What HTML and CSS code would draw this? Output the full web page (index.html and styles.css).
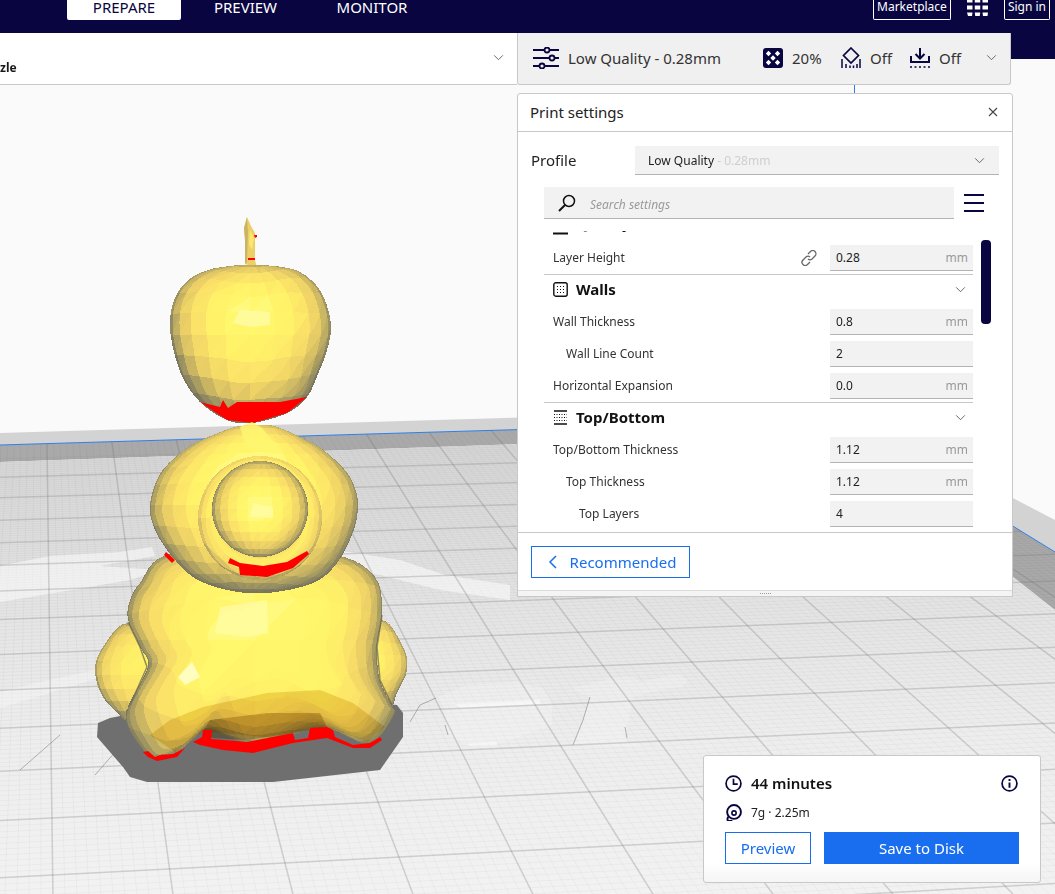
FILE: index.html
```html
<!DOCTYPE html>
<html lang="en">
<head>
<meta charset="utf-8">
<title>Print settings</title>
<link rel="stylesheet" href="styles.css">
</head>
<body>
<div class="app">
  <canvas class="scene" id="scene" width="1055" height="894"></canvas>

  <header class="topbar">
    <nav class="tabs">
      <span class="tab tab-active">PREPARE</span>
      <span class="tab tab-preview">PREVIEW</span>
      <span class="tab tab-monitor">MONITOR</span>
    </nav>
    <div class="top-actions">
      <span class="top-btn">Marketplace</span>
      <svg class="apps" viewBox="0 0 21 16"><path d="M0 0h5.500v2.500H0zM7.750 0h5.500v2.500h-5.500zM15.500 0H21v2.500h-5.500zM0 5.500h5.500v4H0zM7.750 5.500h5.500v4h-5.500zM15.500 5.500H21v4h-5.500zM0 12.500h5.500L5 16H1zM7.750 12.500h5.500l-.5 3.500h-4.500zM15.500 12.500H21l-.5 3.500H16z" fill="#fff"/></svg>
      <span class="top-btn">Sign in</span>
    </div>
  </header>

  <div class="toolrow">
    <div class="machine">
      <span class="machine-name">zle</span>
      <svg class="chev" viewBox="0 0 12 8"><path d="M1 1.500l5 5 5-5" fill="none" stroke="#555" stroke-width="1"/></svg>
    </div>
    <div class="quality">
      <svg class="q-icon q-sliders" viewBox="0 0 26 22"><g fill="none" stroke="#080540" stroke-width="1.800"><path d="M0 3h11M17 3h9M0 11h16M22 11h4M0 19h6M12 19h14"/><circle cx="14" cy="3" r="2.500"/><circle cx="19" cy="11" r="2.500"/><circle cx="9" cy="19" r="2.500"/></g></svg>
      <span class="q-name">Low Quality - 0.28mm</span>
      <svg class="q-icon q-infill" viewBox="0 0 20 20"><rect width="20" height="20" rx="3" fill="#080540"/><path d="M5.500 2.800l2.700 2.700-2.700 2.700-2.700-2.700zM14.500 2.800l2.700 2.700-2.700 2.700-2.700-2.700zM10 7.300l2.700 2.700-2.700 2.700L7.300 10zM5.500 11.800l2.700 2.700-2.700 2.700-2.700-2.700zM14.500 11.800l2.700 2.700-2.700 2.700-2.700-2.700z" fill="#fff"/></svg>
      <span class="q-val q-val-infill">20%</span>
      <svg class="q-icon q-support" viewBox="0 0 20 21"><g fill="none" stroke="#080540" stroke-width="1.700"><path d="M10 1l7.500 7.500L10 16 2.500 8.500z"/><path d="M1 21v-9M5 21v-4M9 21v-2.500M12.500 21v-2.500M16 21v-4M19 21v-9" stroke-width="1.500"/></g></svg>
      <span class="q-val q-val-support">Off</span>
      <svg class="q-icon q-adhesion" viewBox="0 0 20 20"><g fill="none" stroke="#080540" stroke-width="2"><path d="M10 0v10M5.500 6l4.500 4.500L14.500 6M1 8v6h18V8"/><path d="M0 19h20" stroke-dasharray="2 2.500" stroke-width="1.700"/></g></svg>
      <span class="q-val q-val-adhesion">Off</span>
      <svg class="chev q-chev" viewBox="0 0 12 8"><path d="M1 1.500l5 5 5-5" fill="none" stroke="#555" stroke-width="1"/></svg>
    </div>
    <div class="nav-ext"></div>
  </div>
  <div class="tick"></div>

  <section class="panel">
    <div class="panel-head">
      <span>Print settings</span>
      <svg class="close" viewBox="0 0 10 10"><path d="M1 1l8 8M9 1l-8 8" stroke="#444" stroke-width="1.100"/></svg>
    </div>
    <div class="profile-row">
      <span class="profile-label">Profile</span>
      <div class="profile-select">
        <span>Low Quality <span class="muted">- 0.28mm</span></span>
        <svg class="chev" viewBox="0 0 12 8"><path d="M1 1.500l5 5 5-5" fill="none" stroke="#555" stroke-width="1"/></svg>
      </div>
    </div>
    <div class="search-row">
      <div class="search">
        <svg class="search-icon" viewBox="0 0 18 18"><circle cx="11" cy="7" r="5.500" fill="none" stroke="#111" stroke-width="1.500"/><path d="M7 11l-6 6" stroke="#111" stroke-width="2"/></svg>
        <span>Search settings</span>
      </div>
      <svg class="menu" viewBox="0 0 20 18"><path d="M0 1h20M0 9h20M0 17h20" stroke="#080540" stroke-width="2"/></svg>
    </div>
    <div class="settings">
      <div class="cat cat-clipped">
        <svg class="cat-icon" viewBox="0 0 15 15"><path d="M0 13.500h15" stroke="#111" stroke-width="2"/></svg>
        <span>Quality</span>
      </div>
      <div class="row">
        <span class="label">Layer Height</span>
        <svg class="link" viewBox="0 0 16 16"><g fill="none" stroke="#666" stroke-width="1.300"><path d="M7 4l2.500-2.500a3 3 0 0 1 4.500 4.500L11 9a3 3 0 0 1-4 0"/><path d="M9 12l-2.500 2.500A3 3 0 0 1 2 10l3-3a3 3 0 0 1 4 0"/></g></svg>
        <div class="field"><span>0.28</span><span class="unit">mm</span></div>
      </div>
      <div class="cat">
        <svg class="cat-icon" viewBox="0 0 15 15"><rect x=".8" y=".8" width="13.400" height="13.400" rx="2" fill="none" stroke="#111" stroke-width="1.400"/><path d="M4 4.500h7M4 7.500h7M4 10.500h7" stroke="#111" stroke-dasharray="1 2"/></svg>
        <span>Walls</span>
        <svg class="chev" viewBox="0 0 12 8"><path d="M1 1.500l5 5 5-5" fill="none" stroke="#555" stroke-width="1"/></svg>
      </div>
      <div class="row">
        <span class="label">Wall Thickness</span>
        <div class="field"><span>0.8</span><span class="unit">mm</span></div>
      </div>
      <div class="row">
        <span class="label ind1">Wall Line Count</span>
        <div class="field"><span>2</span></div>
      </div>
      <div class="row">
        <span class="label">Horizontal Expansion</span>
        <div class="field"><span>0.0</span><span class="unit">mm</span></div>
      </div>
      <div class="cat">
        <svg class="cat-icon" viewBox="0 0 15 15"><path d="M1 1h13M1 14h13" stroke="#111" stroke-width="1.400"/><path d="M1 4.500h13M1 7.500h13M1 10.500h13" stroke="#111" stroke-dasharray="1 1.500"/></svg>
        <span>Top/Bottom</span>
        <svg class="chev" viewBox="0 0 12 8"><path d="M1 1.500l5 5 5-5" fill="none" stroke="#555" stroke-width="1"/></svg>
      </div>
      <div class="row">
        <span class="label">Top/Bottom Thickness</span>
        <div class="field"><span>1.12</span><span class="unit">mm</span></div>
      </div>
      <div class="row">
        <span class="label ind1">Top Thickness</span>
        <div class="field"><span>1.12</span><span class="unit">mm</span></div>
      </div>
      <div class="row">
        <span class="label ind2">Top Layers</span>
        <div class="field"><span>4</span></div>
      </div>
      <div class="scrollbar"></div>
    </div>
    <div class="panel-foot">
      <button class="btn-outline btn-rec" type="button">
        <svg class="back" viewBox="0 0 9 14"><path d="M8 1L2 7l6 6" fill="none" stroke="#196ef0" stroke-width="1.500"/></svg>
        Recommended
      </button>
    </div>
    <div class="grip"><span></span></div>
  </section>

  <section class="summary">
    <div class="sum-time">
      <svg class="sum-icon" viewBox="0 0 16 16"><circle cx="8" cy="8" r="7" fill="none" stroke="#080540" stroke-width="1.600"/><path d="M8 3.500V8.500H12" fill="none" stroke="#080540" stroke-width="1.600"/></svg>
      <span class="sum-title">44 minutes</span>
      <svg class="sum-info" viewBox="0 0 16 16"><circle cx="8" cy="8" r="7" fill="none" stroke="#080540" stroke-width="1.600"/><path d="M8 7v5M8 3.800v1.800" stroke="#080540" stroke-width="1.800"/></svg>
    </div>
    <div class="sum-mat">
      <svg class="sum-icon" viewBox="0 0 16 16"><circle cx="8.500" cy="7.500" r="6.500" fill="none" stroke="#080540" stroke-width="1.800"/><circle cx="8.500" cy="8.500" r="2" fill="none" stroke="#080540" stroke-width="1.500"/><path d="M10.500 4h.1M3 12c-1 2-1 3 0 4h4" fill="none" stroke="#080540" stroke-width="1.800"/></svg>
      <span>7g · 2.25m</span>
    </div>
    <div class="sum-actions">
      <button class="btn-outline btn-preview" type="button">Preview</button>
      <button class="btn-solid" type="button">Save to Disk</button>
    </div>
  </section>
</div>
<script src="scene.js"></script>
</body>
</html>
```
FILE: styles.css
```css
* { box-sizing: border-box; }
html, body { margin: 0; padding: 0; }
body {
  width: 1055px;
  height: 894px;
  overflow: hidden;
  font-family: "Noto Sans", "Open Sans", sans-serif;
  color: #1a1a1a;
  background: #fafafa;
}
.app { position: relative; width: 1055px; height: 894px; overflow: hidden; }
.scene { position: absolute; left: 0; top: 0; width: 1055px; height: 894px; }

.topbar {
  position: relative;
  height: 33px;
  background: #080540;
  display: flex;
  justify-content: space-between;
}
.tabs { display: flex; margin-left: 67px; height: 20px; }
.tab {
  height: 20px;
  color: #fff;
  font-size: 15px;
  line-height: 14px;
  text-align: center;
}
.tab-active {
  width: 114px;
  background: #fff;
  color: #080540;
  border-radius: 0 0 2px 2px;
}
.tab-preview { width: 129px; }
.tab-monitor { width: 124px; }
.top-actions { display: flex; align-items: flex-start; padding-right: 5px; }
.top-btn {
  height: 20px;
  padding: 0 3px;
  border: 1px solid #fff;
  border-top: 0;
  border-radius: 0 0 2px 2px;
  color: #fff;
  font-size: 12px;
  line-height: 14px;
}
.apps { width: 21px; height: 16px; margin: 0 16px; }

.toolrow { position: relative; display: flex; height: 52px; }
.machine {
  width: 517px;
  height: 52px;
  background: #fff;
  border-bottom: 1px solid #c8c8c8;
  display: flex;
  justify-content: flex-end;
  align-items: center;
  padding-right: 13px;
  position: relative;
}
.machine-name {
  position: absolute;
  left: 0;
  top: 27px;
  font-size: 12px;
  font-weight: 700;
  line-height: 16px;
}
.machine .chev { margin-top: -3px; }
.chev { width: 11px; height: 7px; flex: none; }
.quality {
  width: 494px;
  height: 52px;
  background: #f0f0f0;
  border: 1px solid #c8c8c8;
  border-top: 0;
  border-radius: 0 0 3px 3px;
  display: flex;
  align-items: center;
  color: #333;
  font-size: 15px;
  padding-bottom: 2px;
}
.nav-ext { width: 44px; height: 26px; background: #080540; }
.q-icon { flex: none; }
.q-sliders { width: 26px; height: 22px; margin-left: 15px; }
.q-name { margin-left: 9px; width: 195px; white-space: nowrap; }
.q-infill { width: 20px; height: 20px; }
.q-val-infill { margin-left: 9px; width: 30px; }
.q-support { width: 20px; height: 21px; margin-left: 19px; }
.q-val-support { margin-left: 9px; width: 23px; }
.q-adhesion { width: 20px; height: 20px; margin-left: 17px; }
.q-val-adhesion { margin-left: 9px; width: 24px; }
.q-chev { margin-left: 23px; }

.tick {
  position: absolute;
  left: 854px;
  top: 85px;
  width: 1px;
  height: 9px;
  background: #2f7fe6;
}

.panel {
  position: absolute;
  left: 517px;
  top: 93px;
  width: 496px;
  height: 504px;
  background: #fff;
  border: 1px solid #c8c8c8;
  border-radius: 3px 3px 0 0;
  display: flex;
  flex-direction: column;
}
.panel-head {
  height: 38px;
  flex: none;
  border-bottom: 1px solid #c8c8c8;
  display: flex;
  align-items: center;
  justify-content: space-between;
  padding: 0 14px 2px 12px;
  font-size: 15px;
  color: #222;
}
.close { width: 10px; height: 10px; }
.profile-row {
  flex: none;
  height: 29px;
  margin-top: 14px;
  padding-left: 13px;
  display: flex;
  align-items: center;
}
.profile-label { width: 104px; font-size: 15px; color: #222; padding-bottom: 2px; }
.profile-select {
  width: 364px;
  height: 29px;
  background: #f2f2f2;
  border-bottom: 1px solid #b4b4b4;
  display: flex;
  align-items: center;
  justify-content: space-between;
  padding: 0 14px 0 13px;
  font-size: 12px;
  color: #222;
}
.muted { color: #cfcfcf; }
.search-row {
  flex: none;
  margin: 12px 0 0 26px;
  height: 32px;
  display: flex;
  align-items: flex-start;
}
.search {
  width: 410px;
  height: 32px;
  background: #f2f2f2;
  border-bottom: 1px solid #b4b4b4;
  display: flex;
  align-items: center;
  padding-left: 14px;
  font-size: 12px;
  font-style: italic;
  color: #9a9a9a;
}
.search span { margin-top: 4px; }
.search-icon { width: 18px; height: 18px; margin-right: 14px; }
.menu { width: 20px; height: 18px; margin: 7px 0 0 10px; }

.settings {
  position: relative;
  flex: 1 1 auto;
  min-height: 0;
  overflow: hidden;
  padding-left: 26px;
  margin-top: 12px;
}
.row {
  width: 429px;
  height: 32px;
  display: flex;
  align-items: center;
  font-size: 12px;
  color: #333;
}
.label { padding-left: 9px; padding-bottom: 2px; flex: 1 1 auto; }
.ind1 { padding-left: 22px; }
.ind2 { padding-left: 35px; }
.link { width: 16px; height: 16px; margin-right: 13px; }
.field {
  width: 143px;
  height: 26px;
  flex: none;
  background: #f2f2f2;
  border-bottom: 1px solid #b4b4b4;
  display: flex;
  align-items: center;
  justify-content: space-between;
  padding: 0 5px 0 6px;
  font-size: 12px;
  color: #222;
}
.unit { color: #9a9a9a; }
.cat {
  width: 429px;
  height: 32px;
  border-top: 1px solid #c8c8c8;
  display: flex;
  align-items: center;
  padding: 0 7px 2px 9px;
  font-size: 15px;
  font-weight: 700;
  color: #111;
}
.cat > span { margin-bottom: 2px; }
.cat-clipped { margin-top: -21px; border-top: 0; padding-bottom: 4px; }
.cat-clipped .cat-icon { margin-top: 6px; }
.cat-icon { width: 15px; height: 15px; margin-right: 8px; flex: none; }
.cat .chev { margin-left: auto; }
.scrollbar {
  position: absolute;
  left: 463px;
  top: 9px;
  width: 10px;
  height: 84px;
  background: #080540;
  border-radius: 4px;
}

.panel-foot {
  flex: none;
  height: 58px;
  border-top: 1px solid #c8c8c8;
  padding: 13px 0 0 13px;
}
.btn-outline {
  background: #fff;
  border: 1px solid #196ef0;
  color: #196ef0;
  font-family: inherit;
  font-size: 15px;
  padding: 0;
  display: flex;
  align-items: center;
  justify-content: center;
}
.btn-rec { width: 159px; height: 32px; gap: 13px; padding-left: 3px; }
.back { width: 9px; height: 14px; }
.grip {
  flex: none;
  height: 6px;
  border-top: 1px solid #dcdcdc;
  background: #f4f4f4;
  display: flex;
  justify-content: center;
  padding-top: 2px;
}
.grip span {
  width: 11px;
  height: 1px;
  border-top: 1px dotted #999;
}

.summary {
  position: absolute;
  left: 703px;
  top: 755px;
  width: 338px;
  height: 128px;
  background: linear-gradient(#fff 85%, #f5f5f5);
  border: 1px solid #c8c8c8;
  border-radius: 3px;
  padding: 16px 21px 0 21px;
  display: flex;
  flex-direction: column;
}
.sum-time { display: flex; align-items: center; height: 22px; }
.sum-icon { width: 17px; height: 17px; margin-right: 9px; flex: none; }
.sum-title { font-size: 15px; font-weight: 600; color: #111; }
.sum-info { width: 17px; height: 17px; margin-left: auto; margin-right: 1px; }
.sum-mat {
  display: flex;
  align-items: center;
  height: 20px;
  margin-top: 8px;
  font-size: 12px;
  color: #222;
}
.sum-actions { display: flex; margin-top: 10px; gap: 13px; }
.btn-preview { width: 86px; height: 32px; }
.btn-solid {
  width: 195px;
  height: 32px;
  background: #196ef0;
  border: 0;
  color: #fff;
  font-family: inherit;
  font-size: 15px;
}
```
FILE: scene.js
```js
(function () {
  var cv = document.getElementById('scene');
  var ctx = cv.getContext('2d');
  var W = 1055, H = 894;

  function poly(g, pts) {
    g.beginPath();
    pts.forEach(function (p, i) { if (i) g.lineTo(p[0], p[1]); else g.moveTo(p[0], p[1]); });
    g.closePath();
  }
  function fillPoly(pts, color) { poly(ctx, pts); ctx.fillStyle = color; ctx.fill(); }
  function strokeLine(pts) {
    ctx.beginPath();
    pts.forEach(function (p, k) { if (k) ctx.lineTo(p[0], p[1]); else ctx.moveTo(p[0], p[1]); });
    ctx.stroke();
  }

  /* ---------- build plate ---------- */
  ctx.fillStyle = '#fafafa';
  ctx.fillRect(0, 0, W, H);
  fillPoly([[0, 433], [840, 408], [1055, 520], [1055, 552], [840, 420], [0, 445]], '#d3d3d3');
  fillPoly([[0, 445], [840, 420], [1055, 552], [1055, 610], [1013, 577], [840, 433], [0, 462]], '#a9a9a9');

  var floorPts = [[0, 462], [840, 433], [1013, 577], [1055, 610], [1055, 894], [0, 894]];
  var grad = ctx.createLinearGradient(0, 440, 0, 894);
  grad.addColorStop(0, '#d5d5d5');
  grad.addColorStop(0.35, '#e3e3e3');
  grad.addColorStop(0.65, '#ededed');
  grad.addColorStop(1, '#f2f2f2');
  fillPoly(floorPts, grad);

  function rowY(Y, x) {
    var s = -0.028 - (Y - 466) / 391 * 0.024;
    return Y + s * (x - 400);
  }
  function colX(x443, y) { return 40 + (x443 - 40) * (y + 90) / 533; }
  var rows = [446, 466, 486, 508, 530, 552, 577, 605, 639, 674, 711, 753, 801, 857, 920];

  ctx.save();
  poly(ctx, [[0, 445], [840, 420], [1055, 552], [1055, 894], [0, 894]]);
  ctx.clip();

  function strokeRow(Y) { strokeLine([[0, rowY(Y, 0)], [W, rowY(Y, W)]]); }
  function strokeCol(x) { strokeLine([[colX(x, 430), 430], [colX(x, 894), 894]]); }

  ctx.lineWidth = 1;
  ctx.strokeStyle = 'rgba(0,0,0,0.03)';
  var i, j;
  for (i = 0; i < rows.length - 1; i++) {
    for (j = 1; j < 10; j++) strokeRow(rows[i] + (rows[i + 1] - rows[i]) * j / 10);
  }
  for (i = -120; i < 600; i++) {
    if (i % 10) strokeCol(47 + 6.5 * i);
  }

  /* faint pale patches where the plate pattern shows through */
  var pale = 'rgba(255,255,255,0.5)';
  fillPoly([[0, 566], [50, 556], [120, 552], [152, 547], [155, 556], [100, 566], [160, 570], [130, 580], [60, 592], [0, 602]], 'rgba(255,255,255,0.5)');
  fillPoly([[337, 550], [400, 560], [445, 575], [510, 585], [510, 600], [440, 590], [380, 575], [350, 570]], pale);
  fillPoly([[0, 692], [40, 682], [95, 670], [98, 678], [40, 696], [0, 708]], 'rgba(255,255,255,0.3)');
  var soft = 'rgba(255,255,255,0.2)';
  fillPoly([[438, 697], [467, 685], [517, 682], [543, 688], [552, 705], [552, 725], [510, 740], [497, 743], [463, 743], [447, 732], [445, 710]], soft);
  fillPoly([[572, 688], [613, 678], [633, 677], [640, 682], [677, 674], [688, 680], [683, 687], [660, 690], [633, 697], [627, 727], [627, 742], [648, 747], [573, 745], [590, 698]], soft);
  fillPoly([[455, 704], [540, 700], [540, 704], [460, 708]], pale);
  fillPoly([[465, 744], [497, 742], [497, 745], [470, 746]], pale);

  ctx.lineWidth = 1.5;
  ctx.strokeStyle = 'rgba(110,110,110,0.27)';
  rows.forEach(function (Y) { if (Y > 450) strokeRow(Y); });
  for (i = -16; i < 60; i++) strokeCol(47 + 65 * i);
  ctx.restore();

  ctx.lineWidth = 1;
  ctx.strokeStyle = '#2f7fe6';
  strokeLine([[0, 445], [840, 420], [1055, 552]]);

  ctx.strokeStyle = 'rgba(120,120,120,0.55)';
  [[[410, 722], [420, 705], [436, 698]], [[20, 770], [60, 735]], [[95, 775], [130, 735]],
   [[590, 697], [583, 720], [573, 745]], [[627, 738], [625, 727]], [[448, 735], [445, 725]]].forEach(strokeLine);

  /* ---------- shadow ---------- */
  fillPoly([[110, 718], [98, 723], [97, 737], [123, 767], [130, 777], [147, 782], [273, 782], [380, 770], [403, 737], [403, 713], [397, 705], [250, 690]], '#6f6f6f');

  /* ---------- faceted model, rendered pixel by pixel ---------- */
  function smooth(pts) {
    var out = [], n = pts.length;
    for (var a = 0; a < n; a++) {
      var p0 = pts[(a - 1 + n) % n], p1 = pts[a], p2 = pts[(a + 1) % n], p3 = pts[(a + 2) % n];
      for (var s = 0; s < 6; s++) {
        var t = s / 6, t2 = t * t, t3 = t2 * t;
        out.push([
          0.5 * (2 * p1[0] + (p2[0] - p0[0]) * t + (2 * p0[0] - 5 * p1[0] + 4 * p2[0] - p3[0]) * t2 + (3 * p1[0] - p0[0] - 3 * p2[0] + p3[0]) * t3),
          0.5 * (2 * p1[1] + (p2[1] - p0[1]) * t + (2 * p0[1] - 5 * p1[1] + 4 * p2[1] - p3[1]) * t2 + (3 * p1[1] - p0[1] - 3 * p2[1] + p3[1]) * t3)
        ]);
      }
    }
    return out;
  }
  var ANG = 1440;
  function radii(pts, cx, cy) {
    var R = new Float32Array(ANG), n = pts.length;
    for (var a = 0; a < ANG; a++) {
      var th = a / ANG * 2 * Math.PI, ux = Math.cos(th), uy = Math.sin(th), best = 0;
      for (var k = 0; k < n; k++) {
        var A = pts[k], B = pts[(k + 1) % n];
        var ax = A[0] - cx, ay = A[1] - cy, ex = B[0] - A[0], ey = B[1] - A[1];
        var den = ux * ey - uy * ex;
        if (Math.abs(den) < 1e-9) continue;
        var d = (ax * ey - ay * ex) / den, e = (ax * uy - ay * ux) / den;
        if (e >= 0 && e <= 1 && d > best) best = d;
      }
      R[a] = best;
    }
    return R;
  }
  var ramp = [
    [0, 122, 118, 94], [0.25, 160, 150, 98], [0.45, 203, 182, 99], [0.62, 236, 208, 102],
    [0.78, 251, 226, 104], [0.9, 255, 241, 104], [0.985, 255, 247, 108], [1, 255, 250, 125]
  ];
  function rampColor(s) {
    if (s < 0) s = 0;
    if (s > 1) s = 1;
    for (var k = 1; k < ramp.length; k++) {
      if (s <= ramp[k][0]) {
        var a = ramp[k - 1], b = ramp[k], f = (s - a[0]) / (b[0] - a[0]);
        return [a[1] + (b[1] - a[1]) * f, a[2] + (b[2] - a[2]) * f, a[3] + (b[3] - a[3]) * f];
      }
    }
    return [255, 250, 125];
  }
  function hash(a, b, c) {
    var v = Math.sin(a * 127.1 + b * 311.7 + c * 74.7) * 43758.5453;
    return v - Math.floor(v);
  }

  function renderPart(p, id) {
    var pts = smooth(p.pts);
    var R = radii(pts, p.cx, p.cy);
    var minX = 1e9, minY = 1e9, maxX = -1e9, maxY = -1e9;
    pts.forEach(function (q) {
      minX = Math.min(minX, q[0]); maxX = Math.max(maxX, q[0]);
      minY = Math.min(minY, q[1]); maxY = Math.max(maxY, q[1]);
    });
    minX = Math.floor(minX) - 1; minY = Math.floor(minY) - 1;
    var w = Math.ceil(maxX) + 2 - minX, h = Math.ceil(maxY) + 2 - minY;
    var off = document.createElement('canvas');
    off.width = w; off.height = h;
    var og = off.getContext('2d');
    var img = og.createImageData(w, h);
    var L = p.light || [0.02, -0.14, 1], ll = Math.hypot(L[0], L[1], L[2]);
    var lx = L[0] / ll, ly = L[1] / ll, lz = L[2] / ll;
    var step = p.step, gain = p.gain || 1, pw = p.pow || 1;
    for (var y = 0; y < h; y++) {
      for (var x = 0; x < w; x++) {
        var dx = x + minX + 0.5 - p.cx, dy = y + minY + 0.5 - p.cy;
        var d = Math.hypot(dx, dy);
        var th = Math.atan2(dy, dx); if (th < 0) th += 2 * Math.PI;
        var r = R[Math.floor(th / (2 * Math.PI) * ANG) % ANG];
        if (d >= r) continue;
        var t = d / r, m;
        if (p.ring) {
          var u = (t - p.ring) / (1 - p.ring);
          if (u < 0) u = 0;
          m = (2 * u - 1) * 0.82;
        } else {
          m = Math.pow(t, pw);
        }
        var ux = d > 0 ? dx / d : 0, uy = d > 0 ? dy / d : 0;
        var nx = ux * m, ny = uy * m, nz = Math.sqrt(Math.max(0, 1 - m * m));
        var lon = Math.atan2(nx, nz), lat = Math.asin(Math.max(-1, Math.min(1, ny)));
        var fl = lon / step, fa = lat / step;
        var il = Math.floor(fl), ia = Math.floor(fa);
        var tri = (fl - il) + (fa - ia) > 1 ? 1 : 0;
        var qLon = (il + 0.5) * step + (tri ? 0.12 : -0.12) * step;
        var qLat = (ia + 0.5) * step + (tri ? 0.12 : -0.12) * step;
        var cl = Math.cos(qLat);
        var qx = Math.sin(qLon) * cl, qy = Math.sin(qLat), qz = Math.cos(qLon) * cl;
        var s = (qx * lx + qy * ly + qz * lz) * gain + (hash(il, ia, tri + id * 5) - 0.5) * 0.03 + (p.bias || 0);
        var c = rampColor(s);
        var o = (y * w + x) * 4;
        img.data[o] = c[0]; img.data[o + 1] = c[1]; img.data[o + 2] = c[2]; img.data[o + 3] = 255;
      }
    }
    og.putImageData(img, 0, 0);
    ctx.drawImage(off, minX, minY);
  }

  /* stalk */
  fillPoly([[247, 217], [251, 226], [255, 233], [255, 247], [255, 260], [257, 268], [245, 264], [245, 240], [244, 228]], '#eccf66');
  fillPoly([[247, 217], [248, 232], [247, 262], [245, 264], [245, 240], [244, 228]], '#c9b464');
  fillPoly([[250, 230], [254, 238], [252, 250], [249, 244]], '#fbe76c');
  fillPoly([[254, 235], [257, 235], [257, 237], [255, 238]], '#ff0000');
  fillPoly([[248, 258], [255, 258], [255, 260], [248, 260]], '#ff0000');

  /* apple */
  var applePts = [[170, 327], [173, 303], [185, 283], [205, 271], [230, 266], [250, 265], [275, 266], [298, 271], [316, 285], [326, 303], [331, 327], [327, 350], [318, 374], [307, 397], [287, 413], [253, 423], [227, 420], [200, 402], [183, 378], [174, 352]];
  renderPart({ pts: applePts, cx: 250, cy: 335, step: 0.26, pow: 1.15, gain: 1, light: [0.02, -0.28, 1] }, 1);
  fillPoly([[233, 323], [240, 310], [270, 312], [270, 325], [250, 327]], 'rgba(255,252,170,0.75)');
  fillPoly([[200, 402], [220, 407], [223, 400], [228, 408], [237, 402], [280, 402], [307, 397], [287, 413], [253, 423], [227, 420]], '#ff0000');

  /* lobes behind the body */
  renderPart({ pts: [[128, 623], [103, 647], [95, 670], [103, 697], [127, 723], [145, 745], [170, 700], [165, 650]], cx: 150, cy: 675, step: 0.26, pow: 1.1, light: [-0.25, -0.2, 1], bias: -0.1 }, 2);
  renderPart({ pts: [[380, 620], [403, 647], [407, 670], [397, 693], [385, 720], [350, 715], [345, 660]], cx: 360, cy: 668, step: 0.26, pow: 1.1, light: [0.25, -0.2, 1], bias: -0.1 }, 3);

  /* body */
  renderPart({
    pts: [[167, 555], [140, 583], [130, 600], [128, 620], [140, 647], [148, 667], [128, 707], [128, 727], [143, 750], [155, 760], [177, 753], [193, 740], [210, 730], [255, 745], [310, 730], [333, 730], [363, 743], [380, 737], [395, 713], [393, 707], [380, 680], [377, 647], [382, 613], [375, 577], [337, 555], [255, 550]],
    cx: 255, cy: 640, step: 0.2, pow: 1.75, gain: 1
  }, 4);
  ctx.strokeStyle = 'rgba(110,105,85,0.75)';
  ctx.lineWidth = 1.5;
  strokeLine([[128, 622], [140, 647], [147, 667], [130, 705]]);
  strokeLine([[382, 615], [377, 647], [380, 680], [392, 705]]);
  ctx.globalCompositeOperation = 'multiply';
  fillPoly([[150, 735], [170, 720], [203, 707], [267, 693], [320, 690], [353, 703], [385, 727], [367, 742], [333, 729], [310, 728], [273, 738], [203, 731], [175, 752]], '#efdfa8');
  fillPoly([[203, 731], [210, 720], [267, 713], [320, 713], [327, 727], [293, 733], [247, 740], [212, 738]], '#d8c79c');
  ctx.globalCompositeOperation = 'source-over';
  fillPoly([[215, 633], [220, 607], [267, 600], [268, 633], [247, 637]], 'rgba(255,252,170,0.7)');
  fillPoly([[178, 677], [192, 662], [200, 677], [185, 685]], '#fffdc0');

  /* reds along the base */
  fillPoly([[193, 742], [202, 737], [203, 730], [212, 730], [211, 739], [247, 742], [293, 733], [295, 740], [308, 738], [310, 728], [327, 727], [333, 730], [335, 737], [353, 745], [370, 743], [380, 737], [382, 740], [370, 748], [353, 748], [327, 738], [293, 743], [253, 753], [223, 750], [200, 745]], '#ff0000');
  fillPoly([[143, 752], [148, 751], [155, 757], [160, 755], [173, 754], [185, 748], [177, 757], [157, 761], [148, 757]], '#ff0000');

  /* middle tier */
  renderPart({
    pts: [[240, 426], [268, 425], [285, 430], [300, 437], [322, 449], [345, 470], [355, 488], [358, 507], [353, 532], [337, 563], [313, 583], [267, 593], [227, 590], [193, 577], [167, 550], [153, 525], [150, 505], [157, 480], [170, 462], [192, 445], [218, 433]],
    cx: 254, cy: 505, step: 0.2, pow: 1.35, gain: 1, light: [0, -0.3, 1], bias: 0.05
  }, 5);
  fillPoly([[240, 427], [252, 422], [262, 428], [285, 455], [262, 452], [245, 445]], 'rgba(255,246,112,0.85)');
  fillPoly([[166, 552], [175, 560], [172, 563], [164, 555]], '#ff0000');

  /* collar and head */
  var circle = function (cx, cy, r) {
    var a = [];
    for (var k = 0; k < 16; k++) a.push([cx + r * Math.cos(k / 16 * 2 * Math.PI), cy + r * Math.sin(k / 16 * 2 * Math.PI)]);
    return a;
  };
  renderPart({ pts: circle(260, 518, 62), cx: 260, cy: 518, step: 0.32, ring: 0.6, light: [0, -0.25, 1], bias: -0.12 }, 6);
  renderPart({ pts: circle(260, 509, 48), cx: 260, cy: 509, step: 0.24, pow: 1.05, gain: 1, light: [0, -0.08, 1], bias: 0.03 }, 7);
  fillPoly([[250, 517], [253, 503], [273, 507], [273, 518]], 'rgba(255,252,168,0.75)');
  fillPoly([[230, 558], [240, 563], [263, 566], [287, 562], [307, 551], [309, 554], [293, 568], [267, 577], [240, 575], [239, 567], [228, 563]], '#ff0000');
})();
```
